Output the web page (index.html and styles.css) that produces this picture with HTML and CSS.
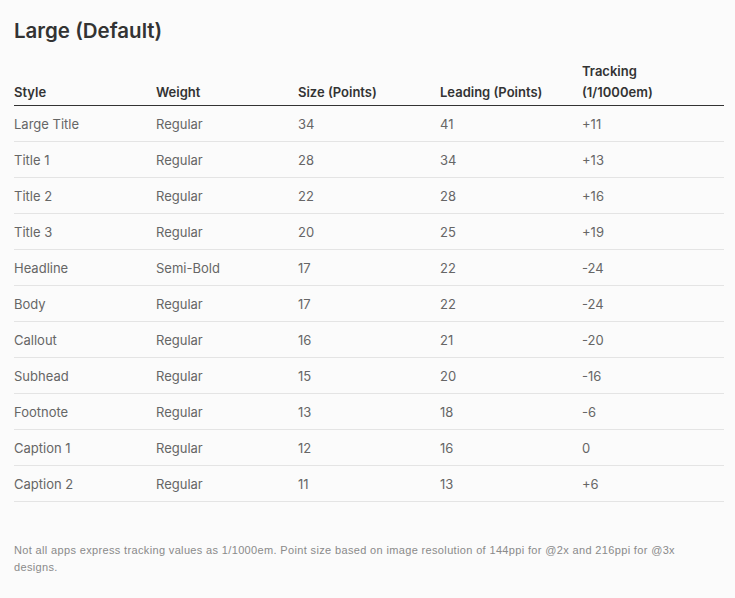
FILE: index.html
```html
<!DOCTYPE html>
<html lang="en">
<head>
<meta charset="utf-8">
<title>Large (Default)</title>
<link rel="stylesheet" href="styles.css">
</head>
<body>
<main class="page">
  <h2 class="title">Large (Default)</h2>
  <table class="type-table">
    <thead>
      <tr>
        <th>Style</th>
        <th>Weight</th>
        <th>Size (Points)</th>
        <th>Leading (Points)</th>
        <th>Tracking<br>(1/1000em)</th>
      </tr>
    </thead>
    <tbody>
      <tr><td>Large Title</td><td>Regular</td><td>34</td><td>41</td><td>+11</td></tr>
      <tr><td>Title 1</td><td>Regular</td><td>28</td><td>34</td><td>+13</td></tr>
      <tr><td>Title 2</td><td>Regular</td><td>22</td><td>28</td><td>+16</td></tr>
      <tr><td>Title 3</td><td>Regular</td><td>20</td><td>25</td><td>+19</td></tr>
      <tr><td>Headline</td><td>Semi-Bold</td><td>17</td><td>22</td><td>-24</td></tr>
      <tr><td>Body</td><td>Regular</td><td>17</td><td>22</td><td>-24</td></tr>
      <tr><td>Callout</td><td>Regular</td><td>16</td><td>21</td><td>-20</td></tr>
      <tr><td>Subhead</td><td>Regular</td><td>15</td><td>20</td><td>-16</td></tr>
      <tr><td>Footnote</td><td>Regular</td><td>13</td><td>18</td><td>-6</td></tr>
      <tr><td>Caption 1</td><td>Regular</td><td>12</td><td>16</td><td>0</td></tr>
      <tr><td>Caption 2</td><td>Regular</td><td>11</td><td>13</td><td>+6</td></tr>
    </tbody>
  </table>
  <p class="note">Not all apps express tracking values as 1/1000em. Point size based on image resolution of 144ppi for @2x and 216ppi for @3x designs.</p>
</main>
</body>
</html>
```
FILE: styles.css
```css
html, body {
  margin: 0;
  padding: 0;
  background: #fbfbfb;
}
body {
  font-family: Inter, "Noto Sans", sans-serif;
  color: #333;
}
.page {
  padding: 19px 11px 0 14px;
}
.title {
  margin: 0;
  font-size: 20.5px;
  line-height: 24px;
  font-weight: 600;
  color: #333;
}
.type-table {
  margin-top: 18px;
  width: 710px;
  border-collapse: collapse;
  table-layout: fixed;
  font-size: 13px;
}
.type-table th {
  text-align: left;
  font-weight: 600;
  color: #333;
  line-height: 21px;
  padding: 0 0 2px 0;
  border-bottom: 1px solid #333;
  vertical-align: bottom;
  width: 142px;
}
.type-table td {
  color: #666;
  height: 35px;
  padding: 0;
  line-height: 20px;
  border-bottom: 1px solid #e4e4e4;
  vertical-align: middle;
}
.note {
  margin: 40px 0 0 0;
  font-family: "Liberation Sans", Arial, sans-serif;
  font-size: 11px;
  letter-spacing: 0.35px;
  line-height: 17px;
  color: #8a8a8a;
  max-width: 690px;
}
```
